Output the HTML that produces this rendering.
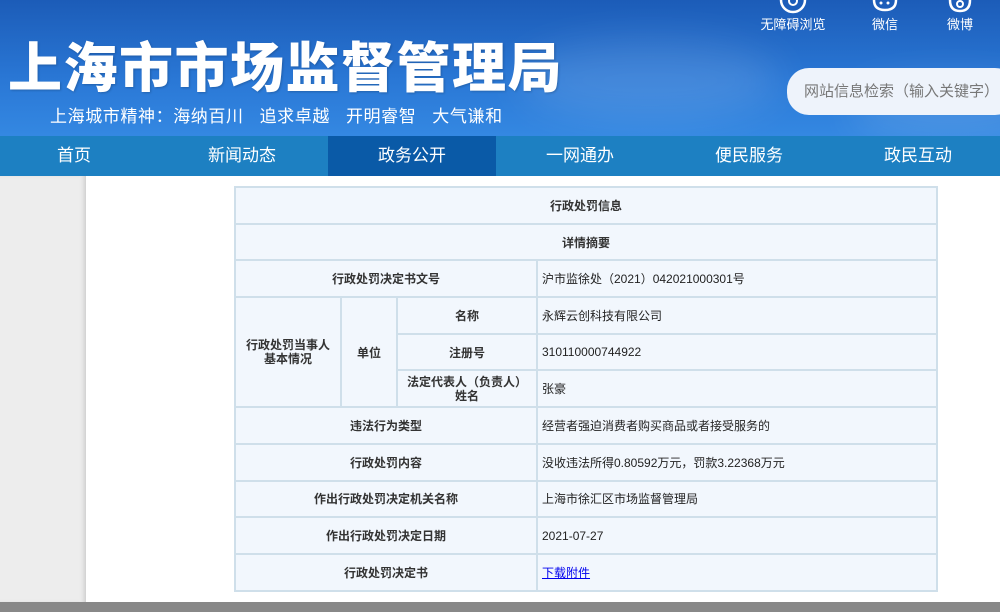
<!DOCTYPE html>
<html><head><meta charset="utf-8"><style>
*{margin:0;padding:0;box-sizing:border-box}
body{width:1000px;height:612px;overflow:hidden;position:relative;font-family:"Liberation Sans","Noto Sans CJK SC",sans-serif;background:#fff}
.hdr{position:absolute;left:0;top:0;width:1000px;height:136px;background:linear-gradient(180deg,#1c5cb8 0%,#2a78d6 60%,#3488e2 100%)}
.cloud{position:absolute;border-radius:50%;background:rgba(255,255,255,.12);filter:blur(20px)}
.title{position:absolute;left:8px;top:24px;font-size:54px;font-weight:900;color:#fff;letter-spacing:1.5px;white-space:nowrap;text-shadow:1px 1px 2px rgba(0,0,0,.2)}
.sub{position:absolute;left:50px;top:102px;font-size:17px;color:#fff;white-space:nowrap;letter-spacing:.6px}
.ic{position:absolute;top:0;color:#fff;font-size:13px;text-align:center}
.search{position:absolute;left:787px;top:68px;width:230px;height:47px;border-radius:22px;background:#eef3fb;color:#777;font-size:15px;line-height:47px;padding-left:17px;white-space:nowrap}
.nav{position:absolute;left:0;top:136px;width:1000px;height:40px;background:#1d80c2}
.nav div{position:absolute;top:0;height:40px;line-height:40px;color:#fff;font-size:17px;text-align:center;width:168px}
.nav .act{background:#0a5aa7}
.lg{position:absolute;left:0;top:176px;width:86px;height:426px;background:#ededed;box-shadow:inset -4px 0 4px -2px #ccc}
.bot{position:absolute;left:0;top:602px;width:1000px;height:10px;background:#888}
table{position:absolute;left:234px;top:186px;width:704px;border-collapse:collapse;background:#f2f7fd;font-size:12px;color:#222}
td{border:2px solid #cfdfea;height:36.7px;padding:0 4px}
td.c{text-align:center;font-weight:bold;color:#333}
a{color:#0000ee;text-decoration:underline}
</style></head><body>
<div class="hdr">
<div class="cloud" style="left:520px;top:40px;width:260px;height:80px"></div>
<div class="cloud" style="left:850px;top:80px;width:200px;height:60px"></div>
<div class="title">上海市市场监督管理局</div>
<div class="sub">上海城市精神：海纳百川 &nbsp; 追求卓越 &nbsp;&nbsp;开明睿智 &nbsp;&nbsp;大气谦和</div>
<div class="ic" style="left:758px;width:70px">
<svg width="30" height="14" viewBox="0 0 30 14" style="display:block;margin:0 auto"><path d="M3 0 A12 12 0 0 0 27 0" fill="none" stroke="#fff" stroke-width="2.5"/><circle cx="15" cy="1" r="4" fill="none" stroke="#fff" stroke-width="2"/></svg>无障碍浏览</div>
<div class="ic" style="left:862px;width:46px">
<svg width="30" height="14" viewBox="0 0 30 14" style="display:block;margin:0 auto"><path d="M4 0 Q4 10 15 10 Q26 10 26 0" fill="none" stroke="#fff" stroke-width="2.5"/><circle cx="11" cy="3" r="1.5" fill="#fff"/><circle cx="18" cy="3" r="1.5" fill="#fff"/></svg>微信</div>
<div class="ic" style="left:940px;width:40px">
<svg width="26" height="14" viewBox="0 0 26 14" style="display:block;margin:0 auto"><path d="M3 0 Q3 11 13 11 Q23 11 23 0" fill="none" stroke="#fff" stroke-width="2.5"/><circle cx="13" cy="4" r="3" fill="none" stroke="#fff" stroke-width="2"/></svg>微博</div>
<div class="search">网站信息检索（输入关键字）</div>
</div>
<div class="nav">
<div style="left:-10px">首页</div><div style="left:158px">新闻动态</div><div class="act" style="left:328px">政务公开</div><div style="left:496px">一网通办</div><div style="left:665px">便民服务</div><div style="left:834px">政民互动</div>
</div>
<div class="lg"></div>
<table>
<colgroup><col style="width:106px"><col style="width:56px"><col style="width:140px"><col></colgroup>
<tr><td class="c" colspan="4">行政处罚信息</td></tr>
<tr><td class="c" colspan="4">详情摘要</td></tr>
<tr><td class="c" colspan="3">行政处罚决定书文号</td><td>沪市监徐处（2021）042021000301号</td></tr>
<tr><td class="c" rowspan="3" style="line-height:14px">行政处罚当事人<br>基本情况</td><td class="c" rowspan="3">单位</td><td class="c">名称</td><td>永辉云创科技有限公司</td></tr>
<tr><td class="c">注册号</td><td>310110000744922</td></tr>
<tr><td class="c" style="line-height:14px">法定代表人（负责人）<br>姓名</td><td>张豪</td></tr>
<tr><td class="c" colspan="3">违法行为类型</td><td>经营者强迫消费者购买商品或者接受服务的</td></tr>
<tr><td class="c" colspan="3">行政处罚内容</td><td>没收违法所得0.80592万元，罚款3.22368万元</td></tr>
<tr><td class="c" colspan="3">作出行政处罚决定机关名称</td><td>上海市徐汇区市场监督管理局</td></tr>
<tr><td class="c" colspan="3">作出行政处罚决定日期</td><td>2021-07-27</td></tr>
<tr><td class="c" colspan="3">行政处罚决定书</td><td><a>下载附件</a></td></tr>
</table>
<div class="bot"></div>
</body></html>
